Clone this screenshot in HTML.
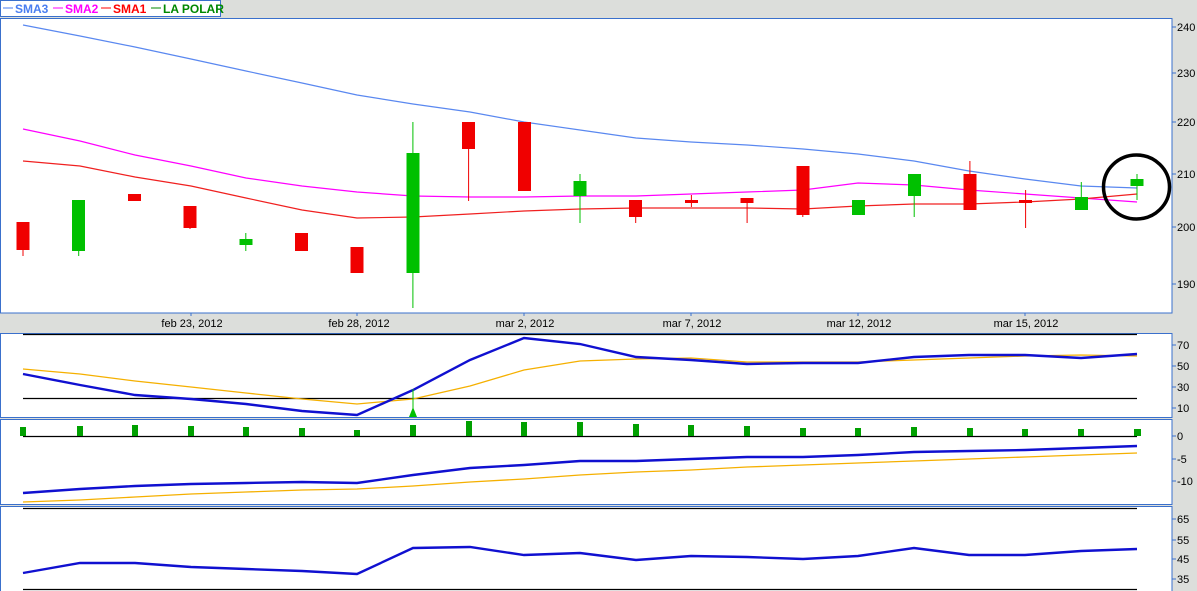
<!DOCTYPE html>
<html><head><meta charset="utf-8"><style>
html,body{margin:0;padding:0;background:#dcdedb;width:1197px;height:591px;overflow:hidden}
svg{display:block}
text{font-family:"Liberation Sans",sans-serif;font-size:11px;fill:#000}
</style></head><body>
<svg width="1197" height="591" viewBox="0 0 1197 591" xmlns="http://www.w3.org/2000/svg">
<rect x="0" y="0" width="1197" height="591" fill="#dcdedb"/>
<!-- legend -->
<rect x="0.5" y="0.5" width="220" height="16" fill="#fff" stroke="#3a70cc"/>
<line x1="3" y1="8" x2="13" y2="8" stroke="#4a7ef0"/><text x="15" y="13" style="fill:#4a7ef0;font-weight:bold;font-size:12px">SMA3</text>
<line x1="53" y1="8" x2="63" y2="8" stroke="#f0f"/><text x="65" y="13" style="fill:#f0f;font-weight:bold;font-size:12px">SMA2</text>
<line x1="101" y1="8" x2="111" y2="8" stroke="#f00"/><text x="113" y="13" style="fill:#f00;font-weight:bold;font-size:12px">SMA1</text>
<line x1="151" y1="8" x2="161" y2="8" stroke="#080"/><text x="163" y="13" style="fill:#080;font-weight:bold;font-size:12px">LA POLAR</text>
<!-- panels -->
<rect x="0.5" y="18.5" width="1171.5" height="294.5" fill="#fff" stroke="#3a70cc"/>
<rect x="0.5" y="333.5" width="1171.5" height="84" fill="#fff" stroke="#3a70cc"/>
<rect x="0.5" y="419.5" width="1171.5" height="85" fill="#fff" stroke="#3a70cc"/>
<rect x="0.5" y="506.5" width="1171.5" height="90" fill="#fff" stroke="#3a70cc"/>

<!-- main chart MAs -->
<polyline fill="none" stroke="#5a88f0" stroke-width="1.2" points="23,25 80,36 135,47 191,59 246,71 302,83 357,95 413,104 470,112 524,122 580,130 636,138 691,142 747,145 803,149 858,154 914,161 969,171 1025,179 1081,186 1137,188"/>
<polyline fill="none" stroke="#f0f" stroke-width="1.2" points="23,129 80,141 135,155 191,166 246,178 302,186 357,192 413,196 470,197 524,197 580,196 636,196 691,194 747,192 803,190 858,183 914,185 969,190 1025,194 1081,198 1137,202"/>
<polyline fill="none" stroke="#f02020" stroke-width="1.2" points="23,161 80,166 135,177 191,186 246,198 302,210 357,218 413,217 470,214 524,211 580,209 636,208 691,208 747,208 803,209 858,206 914,204 969,204 1025,202 1081,199 1137,194"/>

<!-- candles -->
<g fill="#f00000" stroke="#f00000">
<line x1="23" y1="222" x2="23" y2="256"/><rect x="16.5" y="222" width="13" height="28" stroke="none"/>
<rect x="128" y="194" width="13" height="7" stroke="none"/>
<line x1="190" y1="206" x2="190" y2="229"/><rect x="183.5" y="206" width="13" height="22" stroke="none"/>
<rect x="295" y="233" width="13" height="18" stroke="none"/>
<rect x="350.5" y="247" width="13" height="26" stroke="none"/>
<line x1="468.6" y1="122" x2="468.6" y2="201"/><rect x="462" y="122" width="13" height="27" stroke="none"/>
<rect x="518" y="122" width="13" height="69" stroke="none"/>
<line x1="635.7" y1="200" x2="635.7" y2="223"/><rect x="629" y="200" width="13" height="17" stroke="none"/>
<line x1="691.4" y1="195" x2="691.4" y2="207"/><rect x="685" y="200" width="13" height="3" stroke="none"/>
<line x1="747.1" y1="198" x2="747.1" y2="223"/><rect x="740.5" y="198" width="13" height="5" stroke="none"/>
<line x1="802.8" y1="166" x2="802.8" y2="217"/><rect x="796.5" y="166" width="13" height="49" stroke="none"/>
<line x1="969.9" y1="161" x2="969.9" y2="210"/><rect x="963.5" y="174" width="13" height="36" stroke="none"/>
<line x1="1025.6" y1="190" x2="1025.6" y2="228"/><rect x="1019" y="200" width="13" height="3" stroke="none"/>
</g>
<g fill="#00c000" stroke="#00c000">
<line x1="78.7" y1="200" x2="78.7" y2="256"/><rect x="72" y="200" width="13" height="51" stroke="none"/>
<line x1="245.8" y1="233" x2="245.8" y2="251"/><rect x="239.5" y="239" width="13" height="6" stroke="none"/>
<line x1="412.9" y1="122" x2="412.9" y2="308"/><rect x="406.5" y="153" width="13" height="120" stroke="none"/>
<line x1="580" y1="174" x2="580" y2="223"/><rect x="573.5" y="181" width="13" height="15" stroke="none"/>
<rect x="852" y="200" width="13" height="15" stroke="none"/>
<line x1="914.2" y1="174" x2="914.2" y2="217"/><rect x="908" y="174" width="13" height="22" stroke="none"/>
<line x1="1081.3" y1="182" x2="1081.3" y2="210"/><rect x="1075" y="197" width="13" height="13" stroke="none"/>
<line x1="1137" y1="174" x2="1137" y2="200"/><rect x="1130.5" y="179" width="13" height="7" stroke="none"/>
</g>
<ellipse cx="1136.5" cy="187" rx="33" ry="32" fill="none" stroke="#000" stroke-width="3.5"/>

<!-- main axis -->
<g stroke="#3a70cc">
<line x1="1172" y1="27" x2="1176" y2="27"/><line x1="1172" y1="73" x2="1176" y2="73"/><line x1="1172" y1="122" x2="1176" y2="122"/><line x1="1172" y1="174" x2="1176" y2="174"/><line x1="1172" y1="227" x2="1176" y2="227"/><line x1="1172" y1="284" x2="1176" y2="284"/>
<line x1="191" y1="313" x2="191" y2="316"/><line x1="357" y1="313" x2="357" y2="316"/><line x1="524" y1="313" x2="524" y2="316"/><line x1="691" y1="313" x2="691" y2="316"/><line x1="858" y1="313" x2="858" y2="316"/><line x1="1025" y1="313" x2="1025" y2="316"/>
</g>
<text x="1177" y="31">240</text><text x="1177" y="77">230</text><text x="1177" y="126">220</text><text x="1177" y="178">210</text><text x="1177" y="231">200</text><text x="1177" y="288">190</text>
<g text-anchor="middle">
<text x="192" y="327">feb 23, 2012</text><text x="359" y="327">feb 28, 2012</text><text x="525" y="327">mar 2, 2012</text><text x="692" y="327">mar 7, 2012</text><text x="859" y="327">mar 12, 2012</text><text x="1026" y="327">mar 15, 2012</text>
</g>

<!-- panel 2 -->
<line x1="23" y1="334.5" x2="1137" y2="334.5" stroke="#000" stroke-width="1.2"/>
<line x1="23" y1="398.5" x2="1137" y2="398.5" stroke="#000" stroke-width="1.2"/>
<polyline fill="none" stroke="#f5b000" stroke-width="1.3" points="23,369 80,374 135,381 191,387 246,393 302,399 357,404 413,399 470,386 524,370 580,361 636,359 691,358 747,362 803,362 858,362 914,360 969,358 1025,356 1081,355 1137,356"/>
<polyline fill="none" stroke="#1010d0" stroke-width="2.4" points="23,374 80,385 135,395 191,399 246,404 302,411 357,415 413,390 470,360 524,338 580,344 636,357 691,360 747,364 803,363 858,363 914,357 969,355 1025,355 1081,358 1137,354"/>
<line x1="413" y1="389" x2="413" y2="412" stroke="#00c000"/>
<polygon points="413,407 409,417 417,417" fill="#00c000"/>
<g stroke="#3a70cc"><line x1="1172" y1="345" x2="1176" y2="345"/><line x1="1172" y1="366" x2="1176" y2="366"/><line x1="1172" y1="387" x2="1176" y2="387"/><line x1="1172" y1="408" x2="1176" y2="408"/></g>
<text x="1177" y="349">70</text><text x="1177" y="370">50</text><text x="1177" y="391">30</text><text x="1177" y="412">10</text>

<!-- panel 3 -->
<line x1="23" y1="436.5" x2="1137" y2="436.5" stroke="#000" stroke-width="1.2"/>
<g fill="#00a000">
<rect x="20" y="427" width="6" height="9"/><rect x="77" y="426" width="6" height="10"/><rect x="132" y="425" width="6" height="11"/><rect x="188" y="426" width="6" height="10"/><rect x="243" y="427" width="6" height="9"/><rect x="299" y="428" width="6" height="8"/><rect x="354" y="430" width="6" height="6"/><rect x="410" y="425" width="6" height="11"/><rect x="466" y="421" width="6" height="15"/><rect x="521" y="422" width="6" height="14"/><rect x="577" y="422" width="6" height="14"/><rect x="633" y="424" width="6" height="12"/><rect x="688" y="425" width="6" height="11"/><rect x="744" y="426" width="6" height="10"/><rect x="800" y="428" width="6" height="8"/><rect x="855" y="428" width="6" height="8"/><rect x="911" y="427" width="6" height="9"/><rect x="967" y="428" width="6" height="8"/><rect x="1022" y="429" width="6" height="7"/><rect x="1078" y="429" width="6" height="7"/><rect x="1134" y="429" width="7" height="7"/>
</g>
<polyline fill="none" stroke="#f5b000" stroke-width="1.3" points="23,502 80,500 135,497 191,494 246,492 302,490 357,489 413,486 470,482 524,479 580,475 636,472 691,470 747,467 803,465 858,463 914,461 969,459 1025,457 1081,455 1137,453"/>
<polyline fill="none" stroke="#1010d0" stroke-width="2.4" points="23,493 80,489 135,486 191,484 246,483 302,482 357,483 413,475 470,468 524,465 580,461 636,461 691,459 747,457 803,457 858,455 914,452 969,451 1025,450 1081,448 1137,446"/>
<g stroke="#3a70cc"><line x1="1172" y1="436" x2="1176" y2="436"/><line x1="1172" y1="459" x2="1176" y2="459"/><line x1="1172" y1="481" x2="1176" y2="481"/></g>
<text x="1177" y="440">0</text><text x="1177" y="463">-5</text><text x="1177" y="485">-10</text>

<!-- panel 4 -->
<line x1="23" y1="508.5" x2="1137" y2="508.5" stroke="#000" stroke-width="1.2"/>
<line x1="23" y1="589.5" x2="1137" y2="589.5" stroke="#000" stroke-width="1.2"/>
<polyline fill="none" stroke="#1010d0" stroke-width="2.4" points="23,573 80,563 135,563 191,567 246,569 302,571 357,574 413,548 470,547 524,555 580,553 636,560 691,556 747,557 803,559 858,556 914,548 969,555 1025,555 1081,551 1137,549"/>
<g stroke="#3a70cc"><line x1="1172" y1="519" x2="1176" y2="519"/><line x1="1172" y1="540" x2="1176" y2="540"/><line x1="1172" y1="559" x2="1176" y2="559"/><line x1="1172" y1="579" x2="1176" y2="579"/></g>
<text x="1177" y="523">65</text><text x="1177" y="544">55</text><text x="1177" y="563">45</text><text x="1177" y="583">35</text>
</svg>
</body></html>
